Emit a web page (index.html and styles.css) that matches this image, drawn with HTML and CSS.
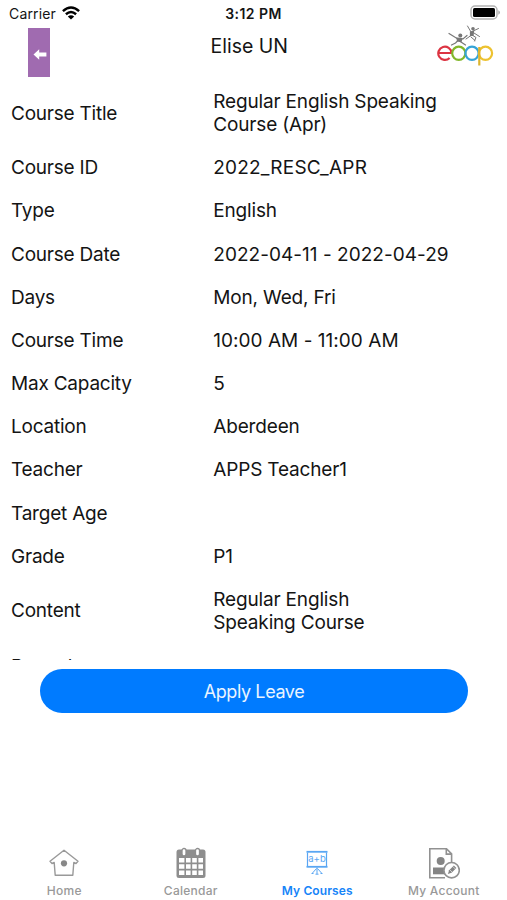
FILE: index.html
```html
<!DOCTYPE html>
<html lang="en">
<head>
<meta charset="utf-8">
<title>Course Details</title>
<link rel="stylesheet" href="styles.css">
</head>
<body>
<div class="status">
  <div class="carrier"><span>Carrier</span>
    <svg width="18" height="14" viewBox="0 0 18 14" fill="none" stroke="#000" stroke-width="2.5"><path d="M.9 5.1Q9-2 17.1 5.1M3.9 8.2Q9 3.8 14.1 8.2"/><path d="M9 13.6 5.8 10.4Q9 7.9 12.2 10.4Z" fill="#000" stroke="none"/></svg>
  </div>
  <time class="clock">3:12 PM</time>
  <svg class="battery" width="30" height="16" viewBox="0 0 30 16"><rect x="1" y="1" width="26" height="13" rx="4" fill="#fff" stroke="#b2b2b2" stroke-width="1.5"/><rect x="3" y="3" width="22" height="9" rx="1.5" fill="#000"/><path d="M28.3 5.3Q30 6 30 7.5T28.3 9.7Z" fill="#aaa"/></svg>
</div>
<header class="header">
  <button class="back" aria-label="Back"><svg width="22" height="49" viewBox="0 0 22 49"><path d="M5.5 26.5 11.2 21.3V24.5H18.4V28.5H11.2V31.7Z" fill="#fff"/></svg></button>
  <h1 class="name">Elise UN</h1>
  <svg class="logo" width="58" height="44" viewBox="0 0 58 44" fill="none">
    <g stroke="#777" stroke-width="1.2" stroke-linecap="round"><path d="M12 8.5 20 13.5 26 14 30 10.5M21 15 24 17 28.5 20M20.5 16 18.5 18 14.5 20"/><path d="M30.5 1 34 7 41.5 3.5M29 14 34 10.5M35 10 39 12.5 37.5 16M37 8 42.5 11.5M34 12 38 15.5" stroke-width="1"/><path d="M20 13 25 13.5 24 16.5 20.5 16ZM33.5 7 36.5 6.5 36 10.5 33.5 10.5Z" fill="#777"/></g>
    <circle cx="23.3" cy="10.5" r="2" fill="#777"/><circle cx="36" cy="3.8" r="1.8" fill="#777"/>
    <g stroke-width="2.2"><path d="M1.8 28H14.5A6.6 6.6 0 1 0 12.6 33" stroke="#dc3442"/><circle cx="21.8" cy="28.3" r="6.6" stroke="#82b72c"/><circle cx="35" cy="28.3" r="6.6" stroke="#36a4d7"/><circle cx="48.5" cy="28.3" r="6.6" stroke="#edc230"/><path d="M42.3 22V40.5" stroke="#ddb42d"/></g>
  </svg>
</header>
<main class="details">
  <dl class="rows">
    <div class="row"><dt>Course Title</dt><dd>Regular English Speaking<br>Course (Apr)</dd></div>
    <div class="row"><dt>Course ID</dt><dd class="code">2022_RESC_APR</dd></div>
    <div class="row"><dt>Type</dt><dd>English</dd></div>
    <div class="row"><dt>Course Date</dt><dd class="figures">2022-04-11 - 2022-04-29</dd></div>
    <div class="row"><dt>Days</dt><dd>Mon, Wed, Fri</dd></div>
    <div class="row"><dt>Course Time</dt><dd class="figures">10:00 AM - 11:00 AM</dd></div>
    <div class="row"><dt>Max Capacity</dt><dd>5</dd></div>
    <div class="row"><dt>Location</dt><dd>Aberdeen</dd></div>
    <div class="row"><dt>Teacher</dt><dd>APPS Teacher1</dd></div>
    <div class="row"><dt>Target Age</dt><dd></dd></div>
    <div class="row"><dt>Grade</dt><dd>P1</dd></div>
    <div class="row"><dt>Content</dt><dd>Regular English<br>Speaking Course</dd></div>
    <div class="row"><dt>Remark</dt><dd></dd></div>
  </dl>
</main>
<button class="apply">Apply Leave</button>
<nav class="tabs">
  <a class="tab"><svg width="32" height="34" viewBox="0 0 32 34" fill="none" stroke="#999" stroke-width="1.4"><path d="M16 4.2 30 15.3 28 17.5 25.8 16.5 24.8 29.2H7.2L6.2 16.5 4 17.5 2 15.3Z" stroke-linejoin="round"/><circle cx="16" cy="17.3" r="3.1" fill="#888" stroke="none"/></svg><span>Home</span></a>
  <a class="tab"><svg width="32" height="34" viewBox="0 0 32 34"><rect x="1.5" y="3.5" width="29" height="28.5" rx="2.5" fill="#8e8e8e"/><path d="M4 12h5.4v4.6H4zM11 12h4.6v4.6H11zM17.2 12h4.6v4.6h-4.6zM23.4 12H28v4.6h-4.6zM4 18.2h5.4v4.6H4zM11 18.2h4.6v4.6H11zM17.2 18.2h4.6v4.6h-4.6zM23.4 18.2H28v4.6h-4.6zM4 24.4h5.4V29H4zM11 24.4h4.6V29H11zM17.2 24.4h4.6V29h-4.6zM23.4 24.4H28V29h-4.6z" fill="#fff"/><rect x="7" y="2.5" width="4" height="7.5" rx="2" fill="#fff" stroke="#8e8e8e" stroke-width="1.3"/><rect x="20.5" y="2.5" width="4" height="7.5" rx="2" fill="#fff" stroke="#8e8e8e" stroke-width="1.3"/></svg><span>Calendar</span></a>
  <a class="tab active"><svg width="32" height="34" viewBox="0 0 32 34" fill="none" stroke="#59a6f3"><path d="M5.5 5.8H26.5" stroke-width="1.8"/><path d="M6.5 6.5V20.5M25.5 6.5V20.5" stroke-width="1.2"/><path d="M5.5 20.8H26.5" stroke-width="1.8"/><path d="M16 21.5V28M15.5 22.5 11.5 27M16.5 22.5 20.5 27M10.5 27.5H12.5M19.5 27.5H21.5M14.5 28.2H17.5"/><text class="board" x="16" y="16.2" text-anchor="middle">a+b</text></svg><span>My Courses</span></a>
  <a class="tab"><svg width="32" height="34" viewBox="0 0 32 34" fill="none" stroke="#919191" stroke-width="1.6"><path d="M17 31.7H1.8V2.8H18.5L23.6 7.9V16M18.3 2.8V8.1H23.6"/><circle cx="12.7" cy="15" r="4" fill="#858585" stroke="none"/><path d="M5 21.5H17V28.3H5Z" fill="#858585" stroke="none"/><circle cx="23.6" cy="24.2" r="7.7" fill="#fff"/><path d="M19.9 27.9 21.1 24.2 25.9 19.4 28.4 21.9 23.6 26.7Z" fill="#858585" stroke="none"/><path d="M21.7 23.7 24.2 26.2M24.8 20.5 27.3 23" stroke="#fff" stroke-width=".6"/></svg><span>My Account</span></a>
</nav>
</body>
</html>
```

FILE: styles.css
```css
* { box-sizing: border-box; }
body {
  margin: 0;
  width: 507px;
  height: 900px;
  overflow: hidden;
  display: flex;
  flex-direction: column;
  background: #fff;
  color: #141414;
  font-family: Inter, "Liberation Sans", sans-serif;
}
button { border: 0; padding: 0; font: inherit; }
.status {
  height: 27px;
  display: grid;
  grid-template-columns: 1fr auto 1fr;
  padding: 0 7px 0 9px;
}
.carrier { display: flex; gap: 6px; font-size: 14px; line-height: 27px; letter-spacing: .15px; }
.carrier svg { margin-top: 6px; }
.clock { margin-right: 2px; font-size: 14px; font-weight: 600; line-height: 27px; letter-spacing: .45px; }
.battery { justify-self: end; margin-top: 5px; }
.header {
  height: 53px;
  flex: none;
  display: grid;
  grid-template-columns: 1fr auto 1fr;
  align-items: start;
  padding: 0 12.5px 0 28px;
}
.back { width: 22px; height: 49px; margin-top: 1px; background: #a06bb0; }
.back svg { display: block; }
.name { margin: 7px 24px 0 0; font-size: 19.5px; font-weight: 400; line-height: 24px; }
.logo { justify-self: end; margin-top: -2px; }
.details { height: 580px; flex: none; overflow: hidden; }
.rows { margin: 0; padding-top: .1px; }
.row {
  display: grid;
  grid-template-columns: 202.3px 1fr;
  align-items: center;
  min-height: 43.17px;
  padding: 9.85px 11px;
  font-size: 19px;
  line-height: 23.3px;
  letter-spacing: -.17px;
}
.row:last-child { margin-top: .5px; }
dt { letter-spacing: -.22px; }
dd { margin: 0; white-space: nowrap; }
.code { letter-spacing: .2px; }
.figures { letter-spacing: .03px; }
.apply {
  height: 44px;
  flex: none;
  margin: 9px 39px 0 40px;
  border-radius: 22px;
  background: #007bff;
  color: #e9f4ff;
  font-size: 18px;
  letter-spacing: -.4px;
}
.tabs { margin-top: auto; height: 54px; display: grid; grid-template-columns: repeat(4, 1fr); padding-left: 1px; }
.tab {
  display: flex;
  flex-direction: column;
  align-items: center;
  color: #999;
  font-size: 12px;
  font-weight: 500;
  line-height: 16px;
  letter-spacing: .25px;
}
.tab svg { flex: none; }
.tab span { margin-top: 3px; }
.active { color: #1684f8; font-weight: 600; letter-spacing: .1px; }
.board { font: 9.5px Inter, sans-serif; fill: #59a6f3; stroke: none; letter-spacing: 0; }
```
